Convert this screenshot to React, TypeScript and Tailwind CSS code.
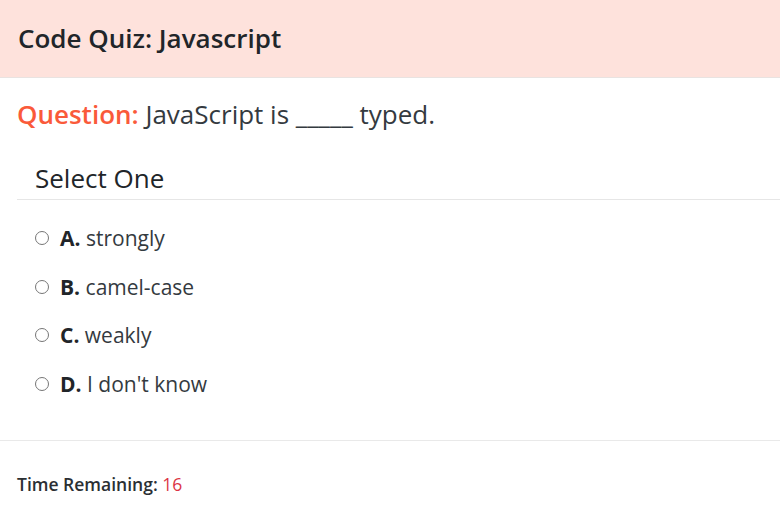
import { useState } from "react";

const options = [
  { letter: "A.", text: "strongly" },
  { letter: "B.", text: "camel-case" },
  { letter: "C.", text: "weakly" },
  { letter: "D.", text: "I don't know" },
];

export default function App() {
  const [picked, setPicked] = useState<string | null>(null);

  return (
    <div className="w-[780px] h-[520px] bg-white text-[#212529] font-['Open_Sans',sans-serif] overflow-hidden">
      {/* Header */}
      <header className="h-[78px] bg-[#fee2dc] border-b border-[#e9e3e1] flex items-center px-[18px]">
        <h1 className="text-[26px] font-semibold">Code Quiz: Javascript</h1>
      </header>

      {/* Question */}
      <main className="pl-[17px]">
        <p className="mt-[19px] text-[26px] leading-[34px] text-[#343a40]">
          <span className="text-[#fa5a3a] font-semibold">Question:</span> JavaScript is _____ typed.
        </p>

        <div className="mt-[30px]">
          <h2 className="pl-[18px] text-[26px] leading-[34px] pb-[4px] border-b border-[#e6e6e6]">
            Select One
          </h2>
          <ul className="mt-[21px] flex flex-col gap-[14.5px] pl-[18px]">
            {options.map((o) => (
              <li key={o.letter}>
                <label className="flex items-center gap-[11px] text-[21px] leading-[34px] text-[#343a40] cursor-pointer">
                  <input
                    type="radio"
                    name="answer"
                    checked={picked === o.letter}
                    onChange={() => setPicked(o.letter)}
                    className="w-[14px] h-[14px] accent-gray-500"
                  />
                  <span>
                    <b className="font-bold text-[#212529]">{o.letter}</b> {o.text}
                  </span>
                </label>
              </li>
            ))}
          </ul>
        </div>
      </main>

      {/* Footer */}
      <footer className="mt-[39px] border-t border-[#e9e9e9] pt-[30px] pl-[17px]">
        <p className="text-[17.5px] font-semibold text-[#2b2f33]">
          Time Remaining: <span className="font-normal text-[#dc3545]">16</span>
        </p>
      </footer>
    </div>
  );
}
